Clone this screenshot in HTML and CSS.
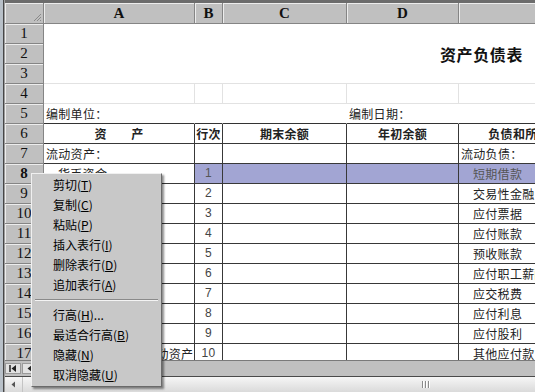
FILE: index.html
```html
<!DOCTYPE html>
<html lang="zh-CN">
<head>
    <meta charset="UTF-8">
    <title>资产负债表</title>
    <link rel="stylesheet" href="styles.css">
</head>
<body>

<div class="window">
    <div class="edge"></div>
    <div class="main">
        <!-- hoja de cálculo -->
        <div class="sheet">
            <div class="corner">
                <svg width="9" height="9" viewBox="0 0 9 9"><path d="M8 1L1 8M8 4L4 8M8 7L7 8" stroke="#8a8a8a" stroke-width="1"/></svg>
            </div>
            <div class="ch">A</div>
            <div class="ch">B</div>
            <div class="ch">C</div>
            <div class="ch">D</div>
            <div class="ch"></div>

            <div class="rh">1</div>
            <div class="title">资产负债表</div>
            <div class="rh">2</div>
            <div class="rh">3</div>

            <div class="rh">4</div>
            <div class="c lt"></div><div class="c lt"></div><div class="c lt"></div><div class="c lt"></div><div class="c lt"></div>

            <div class="rh">5</div>
            <div class="c b5">编制单位：</div><div class="c b5"></div><div class="c b5"></div><div class="c b5">编制日期：</div><div class="c b5"></div>

            <div class="rh">6</div>
            <div class="c g hd">资　　产</div><div class="c g hd">行次</div><div class="c g hd">期末余额</div><div class="c g hd">年初余额</div><div class="c g hd">负债和所有者权益</div>

            <div class="rh">7</div>
            <div class="c g">流动资产：</div><div class="c g"></div><div class="c g"></div><div class="c g"></div><div class="c g">流动负债：</div>

            <div class="rh cur">8</div>
            <div class="c g ind">货币资金</div><div class="c g num sel">1</div><div class="c g sel"></div><div class="c g sel"></div><div class="c g ind sel">短期借款</div>

            <div class="rh">9</div>
            <div class="c g ind">交易性金融资产</div><div class="c g num">2</div><div class="c g"></div><div class="c g"></div><div class="c g ind">交易性金融负债</div>

            <div class="rh">10</div>
            <div class="c g ind">应收票据</div><div class="c g num">3</div><div class="c g"></div><div class="c g"></div><div class="c g ind">应付票据</div>

            <div class="rh">11</div>
            <div class="c g ind">应收账款</div><div class="c g num">4</div><div class="c g"></div><div class="c g"></div><div class="c g ind">应付账款</div>

            <div class="rh">12</div>
            <div class="c g ind">预付款项</div><div class="c g num">5</div><div class="c g"></div><div class="c g"></div><div class="c g ind">预收账款</div>

            <div class="rh">13</div>
            <div class="c g ind">应收利息</div><div class="c g num">6</div><div class="c g"></div><div class="c g"></div><div class="c g ind">应付职工薪酬</div>

            <div class="rh">14</div>
            <div class="c g ind">应收股利</div><div class="c g num">7</div><div class="c g"></div><div class="c g"></div><div class="c g ind">应交税费</div>

            <div class="rh">15</div>
            <div class="c g ind">其他应收款</div><div class="c g num">8</div><div class="c g"></div><div class="c g"></div><div class="c g ind">应付利息</div>

            <div class="rh">16</div>
            <div class="c g ind">存货</div><div class="c g num">9</div><div class="c g"></div><div class="c g"></div><div class="c g ind">应付股利</div>

            <div class="rh">17</div>
            <div class="c g ind">一年内到期的非流动资产</div><div class="c g num">10</div><div class="c g"></div><div class="c g"></div><div class="c g ind">其他应付款</div>
        </div>

        <!-- barra de hojas -->
        <div class="tabs">
            <div class="tb">
                <svg width="8" height="7" viewBox="0 0 8 7"><path d="M1 0V7" stroke="#222" stroke-width="1.5"/><path d="M7 0L2.5 3.5L7 7Z" fill="#222"/></svg>
            </div>
            <div class="tb">
                <svg width="6" height="7" viewBox="0 0 6 7"><path d="M5 0L0.5 3.5L5 7Z" fill="#222"/></svg>
            </div>
        </div>

        <div class="hscroll">
            <div class="arrow">
                <svg width="5" height="7" viewBox="0 0 5 7"><path d="M4 0.5L0.5 3.5L4 6.5Z" fill="#555"/></svg>
            </div>
            <div class="grip"><span></span><span></span><span></span></div>
        </div>
    </div>

    <!-- menú contextual -->
    <div class="menu">
        <div class="mi">剪切(<u>T</u>)</div>
        <div class="mi">复制(<u>C</u>)</div>
        <div class="mi">粘贴(<u>P</u>)</div>
        <div class="mi">插入表行(<u>I</u>)</div>
        <div class="mi">删除表行(<u>D</u>)</div>
        <div class="mi">追加表行(<u>A</u>)</div>
        <div class="sep"></div>
        <div class="mi">行高(<u>H</u>)...</div>
        <div class="mi">最适合行高(<u>B</u>)</div>
        <div class="mi">隐藏(<u>N</u>)</div>
        <div class="mi">取消隐藏(<u>U</u>)</div>
    </div>
</div>

</body>
</html>
```

FILE: styles.css
```css
body {
    margin: 0;
    font-family: "Noto Sans CJK SC", sans-serif;
}

.window {
    position: relative;
    width: 535px;
    height: 392px;
    display: flex;
    overflow: hidden;
    background: #c0c0c0;
}

.edge {
    width: 5px;
    flex: none;
    background: linear-gradient(to right, #b8c0c8 0 3px, #474747 3px 4px, #9c9c9c 4px);
}

.main {
    flex: 1;
    min-width: 0;
    display: flex;
    flex-direction: column;
    border-top: 3px solid #6c6c6c;
}

.sheet {
    height: 357px;
    overflow: hidden;
    display: grid;
    grid-template-columns: 39px 151px 28px 124px 112px 158px;
    grid-template-rows: 21px;
    grid-auto-rows: 20px;
    background: #fff;
    font-size: 12px;
    color: #222;
}

.corner,
.ch,
.rh {
    box-sizing: border-box;
    background: #c0c0c0;
    border-right: 1px solid #858585;
    border-bottom: 1px solid #858585;
    box-shadow: inset 1px 1px 0 #ededed;
}

.corner {
    display: flex;
    align-items: flex-end;
    justify-content: flex-end;
    padding: 0 1px 1px 0;
}

.ch {
    font: bold 15px "Liberation Serif", serif;
    text-align: center;
    line-height: 20px;
    color: #111;
}

.rh {
    grid-column: 1;
    font: 15px "Liberation Serif", serif;
    text-align: center;
    line-height: 19px;
    color: #111;
}

.rh.cur {
    font-weight: bold;
}

.title {
    grid-column: 2 / 7;
    grid-row: span 3;
    box-sizing: border-box;
    border-bottom: 1px solid #e2e2e2;
    padding-left: 396px;
    display: flex;
    align-items: center;
    font-size: 16px;
    font-weight: bold;
    letter-spacing: 0.6px;
    color: #111;
}

.c {
    box-sizing: border-box;
    border-right: 1px solid transparent;
    border-bottom: 1px solid transparent;
    padding-left: 2px;
    line-height: 19px;
    white-space: nowrap;
    letter-spacing: 0.3px;
}

.lt {
    border-color: #e2e2e2;
}

.b5 {
    border-bottom-color: #333;
}

.g {
    border-color: #383838;
}

.hd {
    font-weight: bold;
    text-align: center;
    padding-left: 0;
}

.ind {
    padding-left: 14px;
}

.num {
    font-family: "Liberation Sans", sans-serif;
    text-align: center;
    padding-left: 0;
    color: #444;
}

.sel {
    background: #a2a5d3;
    color: #555;
}

.tabs {
    height: 17px;
    box-sizing: border-box;
    background: #c0c0c0;
    border-top: 1px solid #7a7a7a;
    border-bottom: 1px solid #4a4a4a;
    display: flex;
    align-items: center;
    gap: 1px;
}

.tb {
    width: 16px;
    height: 11px;
    box-sizing: border-box;
    background: #e2e2e2;
    border: 1px solid #9a9a9a;
    display: flex;
    align-items: center;
    justify-content: center;
}

.hscroll {
    height: 15px;
    background: linear-gradient(#f6f6f6, #dadada);
    display: flex;
    align-items: center;
}

.arrow {
    width: 18px;
    height: 15px;
    box-sizing: border-box;
    border-right: 1px solid #c4c4c4;
    display: flex;
    align-items: center;
    justify-content: center;
}

.grip {
    margin-left: 399px;
    display: flex;
    gap: 2px;
}

.grip span {
    width: 1px;
    height: 7px;
    background: #8a8a8a;
    box-shadow: 1px 0 0 #fff;
}

.menu {
    position: absolute;
    left: 31px;
    top: 173px;
    width: 131px;
    box-sizing: border-box;
    padding: 1px 0;
    background: #c8c8c8;
    border: 1px solid;
    border-color: #f0f0f0 #6a6a6a #6a6a6a #f0f0f0;
    box-shadow: 2px 2px 2px rgba(0, 0, 0, 0.45);
}

.mi {
    height: 20px;
    line-height: 20px;
    padding-left: 21px;
    font-size: 12px;
    color: #000;
    white-space: nowrap;
}

.sep {
    margin: 4px 3px;
    border-top: 1px solid #8a8a8a;
    border-bottom: 1px solid #f4f4f4;
}
```
